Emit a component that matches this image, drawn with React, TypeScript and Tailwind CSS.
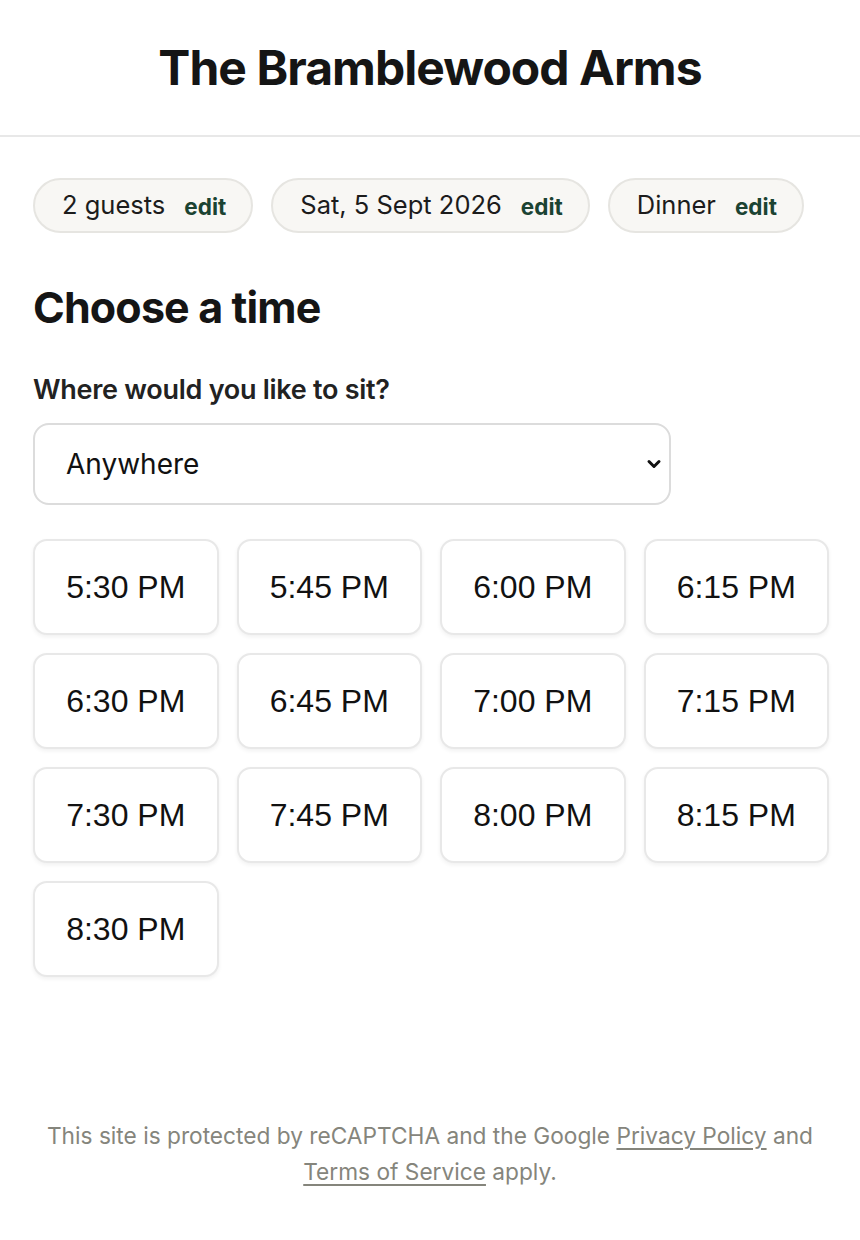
import React from 'react';

const times = [
  '5:30 PM', '5:45 PM', '6:00 PM', '6:15 PM',
  '6:30 PM', '6:45 PM', '7:00 PM', '7:15 PM',
  '7:30 PM', '7:45 PM', '8:00 PM', '8:15 PM',
  '8:30 PM',
];

const Chip: React.FC<{ label: string }> = ({ label }) => (
  <div className="flex h-[55px] items-center gap-[19px] rounded-full border-2 border-[#e6e5e1] bg-[#f8f7f4] pl-[27px] pr-[25px]">
    <span className="text-[25.5px] text-[#1c1c1c]">{label}</span>
    <span className="pt-[3px] text-[22.5px] font-bold text-[#1b4332]">edit</span>
  </div>
);

export default function App() {
  return (
    <div className="min-h-[1240px] bg-white font-['Inter',sans-serif] text-[#151515]">
      <header className="flex h-[137px] items-center justify-center border-b-2 border-[#e8e8e8]">
        <h1 className="text-[48px] font-bold tracking-[-0.02em]">The Bramblewood Arms</h1>
      </header>

      <main className="px-[33px]">
        <div className="mt-[41px] flex gap-[18px]">
          <Chip label="2 guests" />
          <Chip label="Sat, 5 Sept 2026" />
          <Chip label="Dinner" />
        </div>

        <h2 className="mt-[48px] text-[43px] font-bold leading-[52px] tracking-[-0.02em]">Choose a time</h2>

        <label className="mt-[38px] block text-[27px] font-semibold leading-[38px] tracking-[-0.01em] text-[#222]">Where would you like to sit?</label>
        <div className="relative mt-[14px] w-[638px]">
          <select className="h-[82px] w-full appearance-none rounded-[16px] border-2 border-[#dcdcdc] bg-white pl-[31px] text-[28px] text-[#111] outline-none">
            <option>Anywhere</option>
          </select>
          <svg className="pointer-events-none absolute right-[9px] top-[33px] h-[16px] w-[16px]" viewBox="0 0 16 16" fill="none" stroke="#111" strokeWidth={3} strokeLinecap="round" strokeLinejoin="round">
            <path d="M3 5.5l5 5 5-5" />
          </svg>
        </div>

        <div className="mt-[34px] grid w-[796px] grid-cols-4 gap-[18px]">
          {times.map((t) => (
            <button
              key={t}
              className="flex h-[96px] items-center justify-center rounded-[14px] border-2 border-[#e8e8e8] bg-white font-['Liberation_Sans',Arial,sans-serif] text-[32px] text-[#111] shadow-[0_2px_4px_rgba(0,0,0,0.06)]"
            >
              {t}
            </button>
          ))}
        </div>

        <p className="mt-[141px] text-center text-[22.7px] leading-[36px] text-[#85857c]">
          This site is protected by reCAPTCHA and the Google <a className="underline underline-offset-[4px]">Privacy Policy</a> and
          <br />
          <a className="underline underline-offset-[4px]">Terms of Service</a> apply.
        </p>
      </main>
    </div>
  );
}
